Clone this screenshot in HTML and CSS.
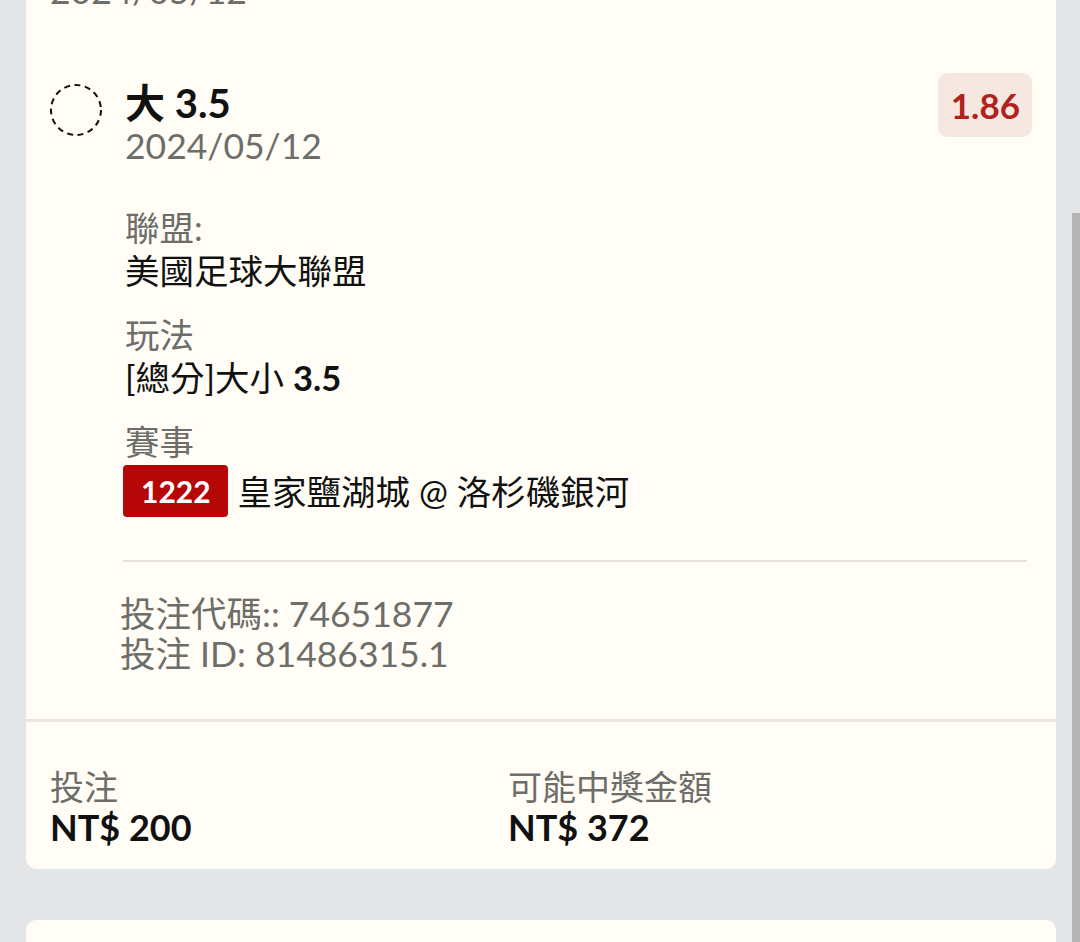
FILE: index.html
```html
<!DOCTYPE html>
<html>

<head>
<title>投注紀錄</title>
<meta charset="utf-8">
<link rel="stylesheet" href="styles.css">
</head>

<body>

<div class="scrollbar"></div>

<div class="page">

	<div class="card">
		<div class="prev-date">2024/05/12</div>

		<div class="bet">
			<svg class="status" width="54" height="54" viewBox="0 0 54 54">
				<circle cx="27" cy="27" r="25" fill="none" stroke="#111" stroke-width="2" stroke-dasharray="6 4.5" />
			</svg>

			<div class="bet-main">
				<div class="bet-head">
					<div>
						<div class="bet-title">大 3.5</div>
						<div class="bet-date">2024/05/12</div>
					</div>
					<div class="odds">1.86</div>
				</div>

				<div class="fields">
					<div class="field">
						<div class="field-label">聯盟:</div>
						<div class="field-value">美國足球大聯盟</div>
					</div>
					<div class="field">
						<div class="field-label">玩法</div>
						<div class="field-value">[總分]大小 <b>3.5</b></div>
					</div>
					<div class="field">
						<div class="field-label">賽事</div>
						<div class="match">
							<span class="match-no">1222</span>
							<span>皇家鹽湖城 @ 洛杉磯銀河</span>
						</div>
					</div>
				</div>

				<div class="line"></div>

				<div class="info">
					<div>投注代碼:: 74651877</div>
					<div>投注 ID: 81486315.1</div>
				</div>
			</div>
		</div>

		<div class="totals">
			<div>
				<div class="total-label">投注</div>
				<div class="total-value">NT$ 200</div>
			</div>
			<div>
				<div class="total-label">可能中獎金額</div>
				<div class="total-value">NT$ 372</div>
			</div>
		</div>
	</div>

	<div class="card next"></div>

</div>

</body>

</html>
```

FILE: styles.css
```css
body{
	margin: 0;
	background: #e4e5e7;
	color: #111;
	font-family: Lato, "Noto Sans CJK TC", sans-serif;
	overflow: hidden;
}

.page{
	padding: 0 24px 0 26px;
}

.card{
	background: #fffdf6;
	border-radius: 10px;
}

.prev-date{
	margin-top: -30px;
	padding-left: 24px;
	font-size: 35.5px;
	line-height: 42px;
	color: #6d6d69;
}

.bet{
	display: flex;
	margin-top: 61px;
	padding: 0 24px 45px 24px;
	border-bottom: 3px solid #e8e6df;
}

.status{
	flex: none;
	margin: 10px 22px 0 -1px;
}

.bet-main{
	flex: 1;
}

.bet-head{
	display: flex;
	justify-content: space-between;
	align-items: flex-start;
}

.bet-title{
	margin-top: 8px;
	font-size: 40px;
	line-height: 44px;
	font-weight: bold;
}

.bet-date{
	font-size: 35.5px;
	line-height: 42px;
	color: #6d6d69;
}

.odds{
	padding: 0 12px 0 13px;
	height: 64px;
	line-height: 64px;
	border-radius: 9px;
	background: #f6e8e1;
	color: #b0231d;
	font-size: 35px;
	font-weight: bold;
}

.fields{
	margin-top: 39px;
	display: flex;
	flex-direction: column;
	gap: 21px;
}

.field{
	font-size: 34.5px;
	line-height: 43px;
}

.field-label{
	color: #6d6d69;
}

.match{
	display: flex;
	align-items: center;
	gap: 10px;
	margin-top: 2px;
}

.match-no{
	margin-left: -2px;
	padding: 0 17px 0 18px;
	height: 52px;
	line-height: 52px;
	border-radius: 4px;
	background: #b50707;
	color: #fff;
	font-size: 30px;
	font-weight: bold;
}

.line{
	margin: 43px 5px 0 -2px;
	height: 2px;
	background: #e4e2da;
}

.info{
	margin: 32px 0 0 -5px;
	font-size: 35.5px;
	line-height: 40px;
	color: #6d6d69;
}

.totals{
	display: grid;
	grid-template-columns: 458px 1fr;
	padding: 45px 24px 22px 24px;
}

.total-label{
	font-size: 34px;
	line-height: 40px;
	color: #6d6d69;
}

.total-value{
	font-size: 36px;
	line-height: 40px;
	font-weight: bold;
}

.next{
	margin-top: 51px;
	height: 300px;
}

.scrollbar{
	position: fixed;
	top: 213px;
	right: 0;
	bottom: 0;
	width: 8px;
	background: #b4b4b4;
}
```
